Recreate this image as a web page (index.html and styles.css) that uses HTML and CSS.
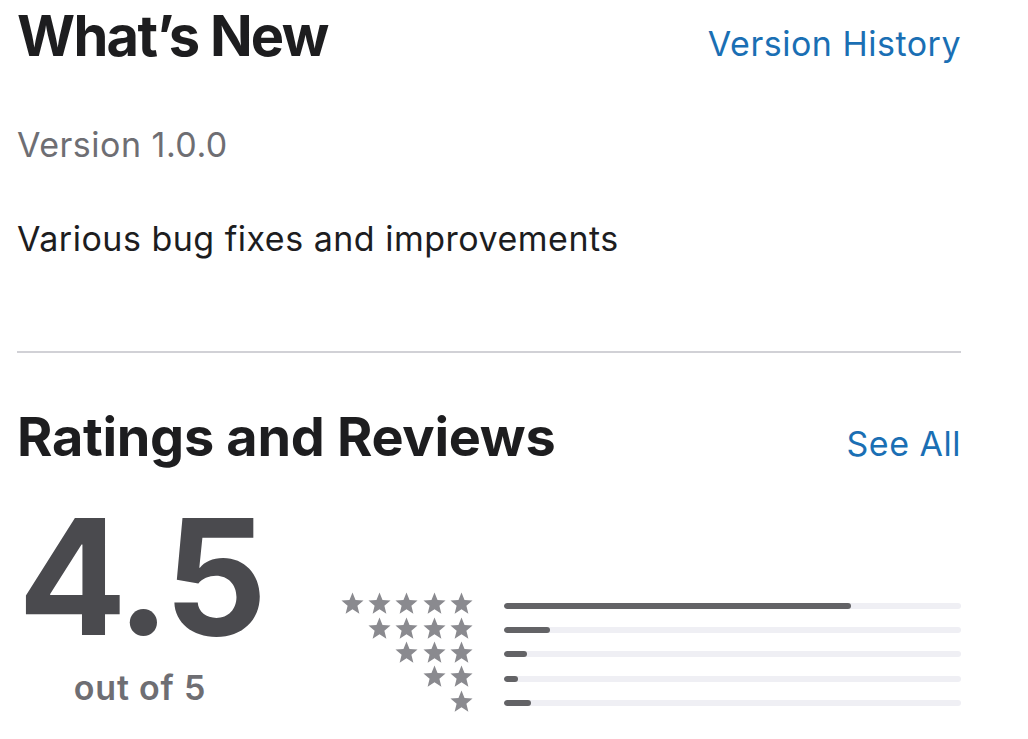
FILE: index.html
```html
<!DOCTYPE html>
<html lang="en">
<head>
<meta charset="utf-8">
<title>What's New</title>
<link rel="stylesheet" href="styles.css">
</head>
<body>
<main class="page">
  <section class="whats-new">
    <header class="section-header">
      <h2 class="title">What’s New</h2>
      <a class="link" href="#">Version History</a>
    </header>
    <p class="version">Version 1.0.0</p>
    <p class="notes">Various bug fixes and improvements</p>
  </section>
  <hr class="divider">
  <section class="ratings">
    <header class="section-header">
      <h2 class="title title-ratings">Ratings and Reviews</h2>
      <a class="link link-see" href="#">See All</a>
    </header>
    <div class="rating-body">
      <div class="score">
        <div class="score-value">4.5</div>
        <div class="score-sub">out of 5</div>
      </div>
      <div class="histogram">
        <div class="stars"><svg class="star" viewBox="0 0 24 24"><polygon points="12,1.5 14.9,8.7 22.6,9.2 16.7,14.2 18.6,21.8 12,17.6 5.4,21.8 7.3,14.2 1.4,9.2 9.1,8.7"/></svg><svg class="star" viewBox="0 0 24 24"><polygon points="12,1.5 14.9,8.7 22.6,9.2 16.7,14.2 18.6,21.8 12,17.6 5.4,21.8 7.3,14.2 1.4,9.2 9.1,8.7"/></svg><svg class="star" viewBox="0 0 24 24"><polygon points="12,1.5 14.9,8.7 22.6,9.2 16.7,14.2 18.6,21.8 12,17.6 5.4,21.8 7.3,14.2 1.4,9.2 9.1,8.7"/></svg><svg class="star" viewBox="0 0 24 24"><polygon points="12,1.5 14.9,8.7 22.6,9.2 16.7,14.2 18.6,21.8 12,17.6 5.4,21.8 7.3,14.2 1.4,9.2 9.1,8.7"/></svg><svg class="star" viewBox="0 0 24 24"><polygon points="12,1.5 14.9,8.7 22.6,9.2 16.7,14.2 18.6,21.8 12,17.6 5.4,21.8 7.3,14.2 1.4,9.2 9.1,8.7"/></svg></div>
        <div class="bar"><div class="fill" style="width: 76%"></div></div>
        <div class="stars"><svg class="star" viewBox="0 0 24 24"><polygon points="12,1.5 14.9,8.7 22.6,9.2 16.7,14.2 18.6,21.8 12,17.6 5.4,21.8 7.3,14.2 1.4,9.2 9.1,8.7"/></svg><svg class="star" viewBox="0 0 24 24"><polygon points="12,1.5 14.9,8.7 22.6,9.2 16.7,14.2 18.6,21.8 12,17.6 5.4,21.8 7.3,14.2 1.4,9.2 9.1,8.7"/></svg><svg class="star" viewBox="0 0 24 24"><polygon points="12,1.5 14.9,8.7 22.6,9.2 16.7,14.2 18.6,21.8 12,17.6 5.4,21.8 7.3,14.2 1.4,9.2 9.1,8.7"/></svg><svg class="star" viewBox="0 0 24 24"><polygon points="12,1.5 14.9,8.7 22.6,9.2 16.7,14.2 18.6,21.8 12,17.6 5.4,21.8 7.3,14.2 1.4,9.2 9.1,8.7"/></svg></div>
        <div class="bar"><div class="fill" style="width: 10%"></div></div>
        <div class="stars"><svg class="star" viewBox="0 0 24 24"><polygon points="12,1.5 14.9,8.7 22.6,9.2 16.7,14.2 18.6,21.8 12,17.6 5.4,21.8 7.3,14.2 1.4,9.2 9.1,8.7"/></svg><svg class="star" viewBox="0 0 24 24"><polygon points="12,1.5 14.9,8.7 22.6,9.2 16.7,14.2 18.6,21.8 12,17.6 5.4,21.8 7.3,14.2 1.4,9.2 9.1,8.7"/></svg><svg class="star" viewBox="0 0 24 24"><polygon points="12,1.5 14.9,8.7 22.6,9.2 16.7,14.2 18.6,21.8 12,17.6 5.4,21.8 7.3,14.2 1.4,9.2 9.1,8.7"/></svg></div>
        <div class="bar"><div class="fill" style="width: 5%"></div></div>
        <div class="stars"><svg class="star" viewBox="0 0 24 24"><polygon points="12,1.5 14.9,8.7 22.6,9.2 16.7,14.2 18.6,21.8 12,17.6 5.4,21.8 7.3,14.2 1.4,9.2 9.1,8.7"/></svg><svg class="star" viewBox="0 0 24 24"><polygon points="12,1.5 14.9,8.7 22.6,9.2 16.7,14.2 18.6,21.8 12,17.6 5.4,21.8 7.3,14.2 1.4,9.2 9.1,8.7"/></svg></div>
        <div class="bar"><div class="fill" style="width: 3%"></div></div>
        <div class="stars"><svg class="star" viewBox="0 0 24 24"><polygon points="12,1.5 14.9,8.7 22.6,9.2 16.7,14.2 18.6,21.8 12,17.6 5.4,21.8 7.3,14.2 1.4,9.2 9.1,8.7"/></svg></div>
        <div class="bar"><div class="fill" style="width: 6%"></div></div>
      </div>
    </div>
  </section>
</main>
</body>
</html>
```

FILE: styles.css
```css
* { box-sizing: border-box; }

html, body {
  margin: 0;
  padding: 0;
  background: #ffffff;
}

body {
  font-family: Inter, "Liberation Sans", Arial, sans-serif;
  color: #1d1d1f;
}

.page {
  width: 961px;
  padding: 4px 0 0 17px;
}

.section-header {
  display: flex;
  justify-content: space-between;
  align-items: baseline;
}

.title {
  margin: 0;
  font-size: 56px;
  line-height: 64px;
  font-weight: 700;
  letter-spacing: -1.7px;
  color: #1d1d1f;
}

.title-ratings {
  font-size: 54px;
  letter-spacing: -0.3px;
}

.link {
  font-size: 34px;
  line-height: 40px;
  letter-spacing: 0.5px;
  color: #1a6fb4;
  text-decoration: none;
}

.link-see {
  position: relative;
}

.version {
  margin: 57px 0 0;
  font-size: 34px;
  line-height: 40px;
  letter-spacing: 0.5px;
  color: #6e6e73;
}

.notes {
  margin: 54px 0 0;
  font-size: 34px;
  line-height: 40px;
  letter-spacing: 0.5px;
  color: #1d1d1f;
}

.divider {
  margin: 92px 0 0;
  border: 0;
  height: 1.5px;
  background: #d1d1d6;
}

.ratings .section-header {
  margin-top: 52px;
}

.rating-body {
  display: flex;
  align-items: flex-start;
  margin-top: 27px;
}

.score {
  width: 246px;
  text-align: center;
}

.score-value {
  font-size: 161px;
  line-height: 161px;
  font-weight: 700;
  letter-spacing: -5px;
  color: #4a4a4e;
}

.score-sub {
  margin-top: 11px;
  font-size: 34px;
  line-height: 40px;
  font-weight: 600;
  letter-spacing: 0.8px;
  color: #6e6e73;
}

.histogram {
  margin-top: 96px;
  display: grid;
  grid-template-columns: 211px 457px;
  grid-auto-rows: 24.4px;
  column-gap: 30px;
  align-items: center;
}

.stars {
  display: flex;
  justify-content: flex-end;
  gap: 2.3px;
}

.star {
  width: 25px;
  height: 25px;
  fill: #8a8a8f;
}

.bar {
  height: 6px;
  margin-top: 4px;
  border-radius: 3px;
  background: #efeff4;
  overflow: hidden;
}

.fill {
  height: 100%;
  border-radius: 3px;
  background: #636366;
}
```
